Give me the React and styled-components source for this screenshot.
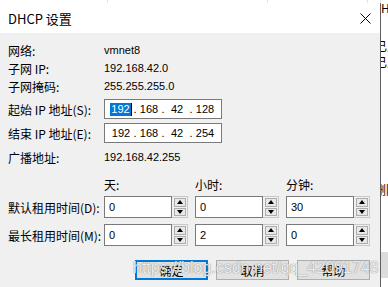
import React from "react";
import styled, { createGlobalStyle } from "styled-components";

const GlobalStyle = createGlobalStyle`
  html, body {
    margin: 0;
    padding: 0;
  }
  body {
    background: #fff;
    font-family: "Liberation Sans", "Noto Sans CJK SC", sans-serif;
  }
`;

const Desktop = styled.div`
  position: relative;
  width: 388px;
  height: 287px;
  overflow: hidden;
  background: #fff;
`;

const BackWindow = styled.div`
  display: flex;
  height: 100%;
`;

const BackColumns = styled.div`
  display: flex;
  width: 381px;
  height: 100%;
`;

const BackCell = styled.div`
  width: ${(p) => p.$w}px;
  height: 100%;
  border-right: 1px solid #e2e2e2;
  box-sizing: border-box;
`;

const Peek = styled.div`
  width: 7px;
  overflow: hidden;
  display: flex;
  flex-direction: column;
  font-family: "Noto Sans CJK SC", sans-serif;
  font-size: 12px;
  line-height: 16px;
  color: #000;
  white-space: nowrap;
`;

const PeekText = styled.div`
  margin-top: ${(p) => p.$top}px;
  margin-left: ${(p) => p.$shift || 0}px;
`;

const PeekButton = styled.div`
  margin-top: ${(p) => p.$top}px;
  height: 26px;
  background: #dcdcdc;
`;

const Dialog = styled.div`
  position: absolute;
  top: 3px;
  left: 0;
  width: 381px;
  height: 284px;
  box-sizing: border-box;
  border-right: 1px solid #5f5f5f;
  display: flex;
  flex-direction: column;
  background: #f0f0f0;
`;

const TitleBar = styled.div`
  height: 30px;
  flex-shrink: 0;
  display: flex;
  align-items: center;
  justify-content: space-between;
  padding: 0 9px 0 8px;
  background: #fff;
`;

const Title = styled.div`
  font-family: "Noto Sans CJK SC", sans-serif;
  font-size: 13px;
  color: #000;
`;

const CloseButton = styled.div`
  width: 11px;
  height: 11px;
  display: flex;
`;

const Body = styled.div`
  flex: 1;
  display: flex;
  flex-direction: column;
  padding: 8px 10px 0 8px;
`;

const Row = styled.div`
  display: flex;
  align-items: center;
  height: ${(p) => p.$h || 18}px;
  margin-top: ${(p) => p.$mt || 0}px;
`;

const Label = styled.div`
  width: 96px;
  flex-shrink: 0;
  font-family: "Noto Sans CJK SC", sans-serif;
  font-size: 12px;
  color: #000;
  white-space: nowrap;
`;

const Value = styled.div`
  font-size: 11px;
  color: #000;
`;

const IpBox = styled.div`
  width: 118px;
  height: 20px;
  box-sizing: border-box;
  border: 1px solid #7a7a7a;
  background: #fff;
  display: flex;
  align-items: center;
  padding-left: 4px;
  font-size: 11px;
  color: #000;
`;

const Octet = styled.div`
  width: 24px;
  display: flex;
  justify-content: center;
`;

const Selected = styled.span`
  background: #0078d7;
  color: #fff;
  line-height: 13px;
  padding: 0 1px;
  border-right: 1px solid #000;
`;

const Dot = styled.div`
  width: 4px;
  text-align: center;
`;

const LeaseGrid = styled.div`
  display: grid;
  grid-template-columns: 96px 91px 91px 84px;
  grid-template-rows: 19px 28px 22px;
  margin-top: 11px;
`;

const ColHead = styled.div`
  font-family: "Noto Sans CJK SC", sans-serif;
  font-size: 12px;
  line-height: 16px;
  color: #000;
`;

const LeaseLabel = styled(Label)`
  height: 22px;
  display: flex;
  align-items: center;
`;

const SpinField = styled.div`
  width: 84px;
  height: 22px;
  display: flex;
`;

const SpinInput = styled.div`
  width: 68px;
  box-sizing: border-box;
  border: 1px solid #7a7a7a;
  background: #fff;
  font-size: 11px;
  color: #000;
  display: flex;
  align-items: center;
  padding-left: 4px;
`;

const Spinner = styled.div`
  width: 16px;
  box-sizing: border-box;
  border: 1px solid #c8c8c8;
  border-left: none;
  padding: 1px 1px 1px 2px;
  display: flex;
  flex-direction: column;
  gap: 1px;
`;

const SpinButton = styled.div`
  flex: 1;
  box-sizing: border-box;
  border: 1px solid #adadad;
  background: #e8e8e8;
  display: flex;
  align-items: center;
  justify-content: center;
`;

const Buttons = styled.div`
  display: flex;
  justify-content: flex-end;
  gap: 8px;
  margin-top: 14px;
`;

const Button = styled.div`
  width: 73px;
  height: 20px;
  box-sizing: border-box;
  border: ${(p) => (p.$primary ? "2px solid #0078d7" : "1px solid #adadad")};
  background: #e1e1e1;
  display: flex;
  align-items: center;
  justify-content: center;
  font-family: "Noto Sans CJK SC", sans-serif;
  font-size: 12px;
  color: #000;
`;

const Watermark = styled.div`
  position: absolute;
  left: 133px;
  top: 258px;
  font-family: "Liberation Sans", sans-serif;
  font-size: 16px;
  line-height: 20px;
  color: rgba(255, 255, 255, 0.85);
  text-shadow: 0 0 1px rgba(110, 110, 110, 0.7), 0 0 1px rgba(110, 110, 110, 0.5);
  pointer-events: none;
  white-space: nowrap;
`;

const Arrow = ({ up }) => (
  <svg width="6" height="4" viewBox="0 0 6 4">
    <path d={up ? "M0 4 L3 0 L6 4 Z" : "M0 0 L3 4 L6 0 Z"} fill="#000" />
  </svg>
);

const Spin = ({ value }) => (
  <SpinField>
    <SpinInput>{value}</SpinInput>
    <Spinner>
      <SpinButton>
        <Arrow up />
      </SpinButton>
      <SpinButton>
        <Arrow />
      </SpinButton>
    </Spinner>
  </SpinField>
);

const IpField = ({ parts, selected }) => (
  <IpBox>
    {parts.map((p, i) => (
      <React.Fragment key={i}>
        {i > 0 && <Dot>.</Dot>}
        <Octet>{selected && i === 0 ? <Selected>{p}</Selected> : p}</Octet>
      </React.Fragment>
    ))}
  </IpBox>
);

const App = () => {
  return (
    <>
      <GlobalStyle />
      <Desktop>
        <BackWindow>
          <BackColumns>
            <BackCell $w={108} />
            <BackCell $w={160} />
            <BackCell $w={100} />
            <BackCell $w={13} />
          </BackColumns>
          <Peek>
            <PeekText $top={0}>HCP</PeekText>
            <PeekText $top={22} $shift={-6}>已启用</PeekText>
            <PeekText $top={0} $shift={-6}>已启用</PeekText>
            <PeekText $top={112} $shift={-7}>删除</PeekText>
            <PeekButton $top={54} />
          </Peek>
        </BackWindow>

        <Dialog>
          <TitleBar>
            <Title>DHCP 设置</Title>
            <CloseButton>
              <svg width="11" height="11" viewBox="0 0 11 11">
                <path d="M0.5 0.5 L10.5 10.5 M10.5 0.5 L0.5 10.5" stroke="#000" strokeWidth="1" />
              </svg>
            </CloseButton>
          </TitleBar>
          <Body>
            <Row>
              <Label>网络:</Label>
              <Value>vmnet8</Value>
            </Row>
            <Row>
              <Label>子网 IP:</Label>
              <Value>192.168.42.0</Value>
            </Row>
            <Row>
              <Label>子网掩码:</Label>
              <Value>255.255.255.0</Value>
            </Row>
            <Row $h={20} $mt={4}>
              <Label>起始 IP 地址(S):</Label>
              <IpField parts={["192", "168", "42", "128"]} selected />
            </Row>
            <Row $h={20} $mt={4}>
              <Label>结束 IP 地址(E):</Label>
              <IpField parts={["192", "168", "42", "254"]} />
            </Row>
            <Row $mt={5}>
              <Label>广播地址:</Label>
              <Value>192.168.42.255</Value>
            </Row>

            <LeaseGrid>
              <div />
              <ColHead>天:</ColHead>
              <ColHead>小时:</ColHead>
              <ColHead>分钟:</ColHead>

              <LeaseLabel>默认租用时间(D):</LeaseLabel>
              <Spin value="0" />
              <Spin value="0" />
              <Spin value="30" />

              <LeaseLabel>最长租用时间(M):</LeaseLabel>
              <Spin value="0" />
              <Spin value="2" />
              <Spin value="0" />
            </LeaseGrid>

            <Buttons>
              <Button $primary>确定</Button>
              <Button>取消</Button>
              <Button>帮助</Button>
            </Buttons>
          </Body>
        </Dialog>

        <Watermark>https://blog.csdn.net/qq_42091748</Watermark>
      </Desktop>
    </>
  );
};

export default App;
